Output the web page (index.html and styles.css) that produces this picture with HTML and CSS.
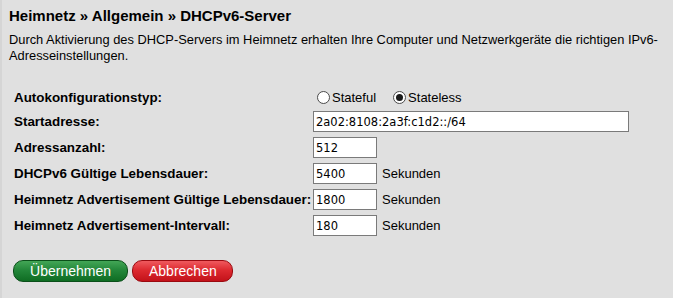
FILE: index.html
```html
<!DOCTYPE html>
<html lang="de">
<head>
<meta charset="utf-8">
<title>DHCPv6-Server</title>
<link rel="stylesheet" href="styles.css">
</head>
<body>
<div class="page">
  <h1 class="title">Heimnetz » Allgemein » DHCPv6-Server</h1>
  <p class="intro">Durch Aktivierung des DHCP-Servers im Heimnetz erhalten Ihre Computer und Netzwerkgeräte die richtigen IPv6-Adresseinstellungen.</p>
  <form class="form">
    <label class="lbl radio-lbl">Autokonfigurationstyp:</label>
    <div class="field radio-field">
      <label class="radio"><input type="radio" name="typ" class="rb"><span>Stateful</span></label>
      <label class="radio"><input type="radio" name="typ" class="rb" checked><span>Stateless</span></label>
    </div>

    <label class="lbl">Startadresse:</label>
    <div class="field"><input class="txt wide" type="text" value="2a02:8108:2a3f:c1d2::/64"></div>

    <label class="lbl">Adressanzahl:</label>
    <div class="field"><input class="txt" type="text" value="512"></div>

    <label class="lbl">DHCPv6 Gültige Lebensdauer:</label>
    <div class="field"><input class="txt" type="text" value="5400"><span class="unit">Sekunden</span></div>

    <label class="lbl">Heimnetz Advertisement Gültige Lebensdauer:</label>
    <div class="field"><input class="txt" type="text" value="1800"><span class="unit">Sekunden</span></div>

    <label class="lbl">Heimnetz Advertisement-Intervall:</label>
    <div class="field"><input class="txt" type="text" value="180"><span class="unit">Sekunden</span></div>
  </form>
  <div class="buttons">
    <button type="button" class="btn ok">Übernehmen</button>
    <button type="button" class="btn cancel">Abbrechen</button>
  </div>
</div>
</body>
</html>
```
FILE: styles.css
```css
html, body {
  margin: 0;
  padding: 0;
  background: #e0e0e0;
  height: 100%;
}
body {
  font-family: "Liberation Sans", Arial, sans-serif;
  color: #000;
}
.page {
  box-sizing: border-box;
  min-height: 100%;
  border-left: 2px solid #d5d5d5;
  padding: 6px 0 0 7px;
}
.title {
  margin: 0;
  font-size: 15px;
  line-height: 19px;
  font-weight: bold;
}
.intro {
  margin: 7px 0 0 0;
  font-size: 12.85px;
  line-height: 16px;
  width: 660px;
}
.form {
  margin: 25px 0 0 5px;
  display: grid;
  grid-template-columns: 299px auto;
  row-gap: 5px;
  align-items: center;
}
.lbl {
  font-weight: bold;
  font-size: 13.4px;
  line-height: 16px;
  white-space: nowrap;
}
.field {
  display: flex;
  align-items: center;
  height: 21px;
}
.radio-field {
  height: 17px;
}
.radio {
  display: flex;
  align-items: center;
  font-size: 13px;
  margin-right: 13px;
}
.rb {
  appearance: none;
  -webkit-appearance: none;
  margin: 0 2px 0 4px;
  width: 13px;
  height: 13px;
  border: 1px solid #4a4a4a;
  border-radius: 50%;
  background: #fff;
  box-sizing: border-box;
  position: relative;
}
.rb:checked::after {
  content: "";
  position: absolute;
  left: 2px;
  top: 2px;
  width: 7px;
  height: 7px;
  border-radius: 50%;
  background: #1a1a1a;
}
.txt {
  box-sizing: border-box;
  height: 21px;
  width: 64px;
  margin: 0;
  padding: 0 2px;
  border: 1px solid #7a7a7a;
  background: #fff;
  font-family: "DejaVu Sans", Tahoma, sans-serif;
  font-size: 11.5px;
  color: #000;
  outline: none;
}
.txt.wide {
  width: 316px;
}
.unit {
  margin-left: 5px;
  font-size: 13px;
}
.buttons {
  display: flex;
  gap: 4px;
  margin: 24px 0 0 4px;
}
.btn {
  box-sizing: border-box;
  height: 22px;
  padding: 0 16px;
  border-radius: 10px;
  font-family: "Liberation Sans", Arial, sans-serif;
  font-size: 14px;
  color: #fff;
  cursor: pointer;
}
.btn.ok {
  width: 115px;
  border: 1px solid #0b4f1a;
  background: linear-gradient(#43a656 0%, #23873a 45%, #0f6d23 100%);
}
.btn.cancel {
  width: 101px;
  border: 1px solid #9a0a10;
  background: linear-gradient(#ef5a5e 0%, #dd2a30 45%, #c3121a 100%);
}
```
